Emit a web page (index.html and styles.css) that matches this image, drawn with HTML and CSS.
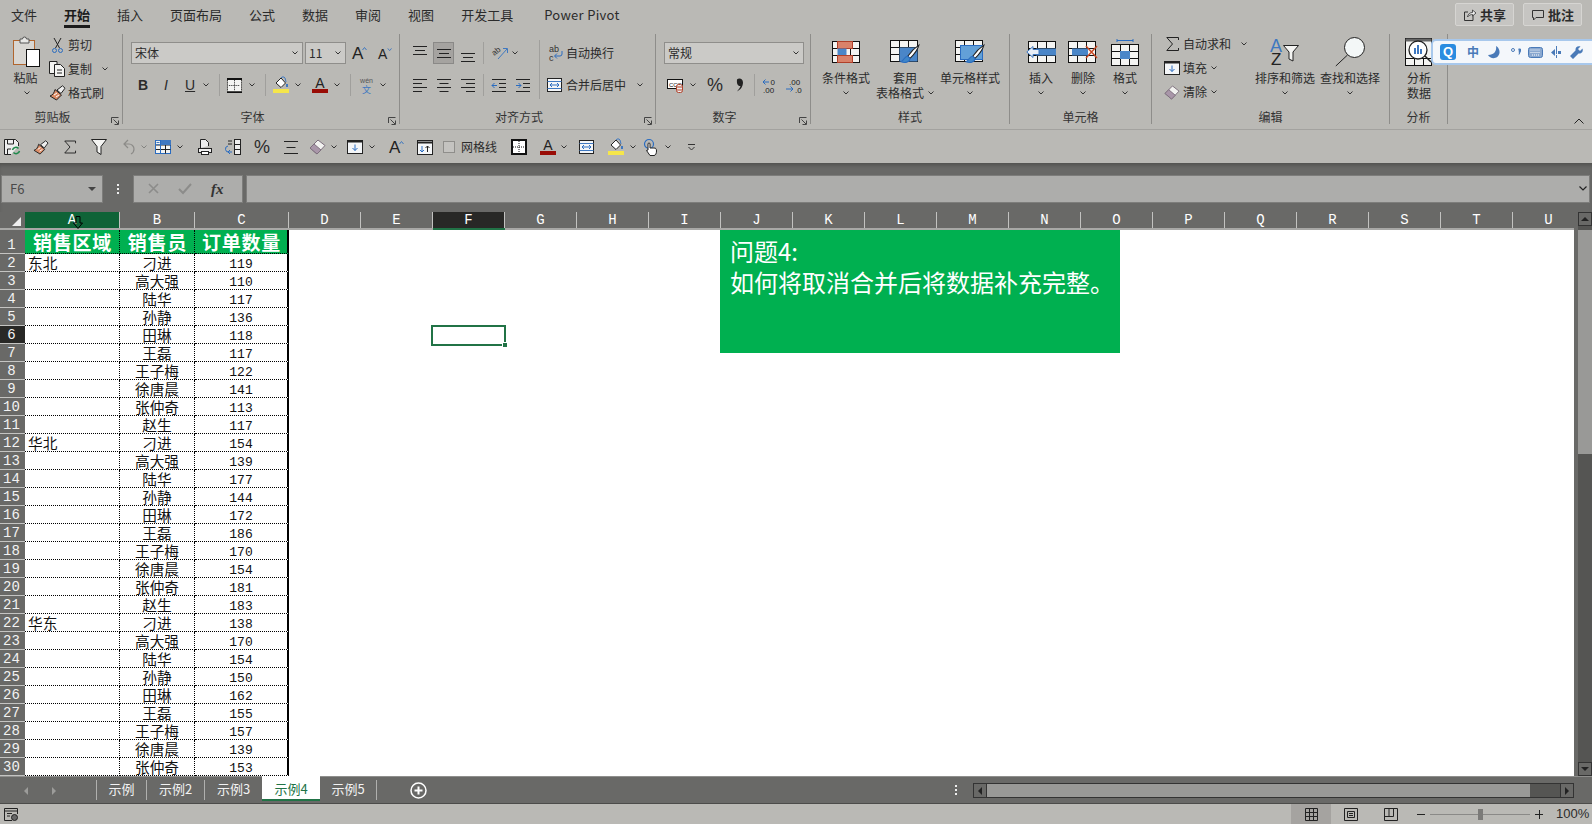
FILE: index.html
```html
<html lang="zh-CN">

<head>
  <meta charset="UTF-8">
  <title>Excel</title>
  <link rel="stylesheet" href="styles.css">
</head>

<body>
  <svg class="defs">
    <symbol id="chev" viewBox="0 0 6 4"><path d="M.5 .5 3 3 5.500 .5" fill="none" stroke="#333"/></symbol>
    <symbol id="launch" viewBox="0 0 8 8"><path d="M.5 6V.5H7.500M2.500 2.500 7 7M7.500 3.500V7.500H3.500" fill="none" stroke="#444"/></symbol>
    <symbol id="brush" viewBox="0 0 17 16"><path d="M8 5 13.500 .8 16 3.200 12 8.500Z" fill="#eee" stroke="#222"/><path d="M6 4.500 12.500 10 7.500 15 1 11C4 10 5 8 6 4.500Z" fill="#d98a64" stroke="#222"/><path d="M5 10l3-2M7 12l3-2" stroke="#fff"/></symbol>
    <symbol id="eraser" viewBox="0 0 17 16"><path d="M1 9 9 1 16 6.500 8 15Z" fill="#f2f2f0" stroke="#7d6f7d"/><path d="M1 9 5 5 12 11 8 15Z" fill="#a996a9" stroke="#7d6f7d"/></symbol>
    <symbol id="fill" viewBox="0 0 16 18"><path d="M3 7 8 2 12.500 7 8 11.500Z" fill="#fff" stroke="#222"/><path d="M8 2C9 .5 11 .5 12 2l1 4" fill="none" stroke="#3f78c0"/><path d="M14 8v3" stroke="#3f78c0" stroke-width="2"/><rect y="13" width="16" height="4" fill="#f5e64a"/></symbol>
    <symbol id="fonta" viewBox="0 0 16 18"><text x="8" y="11.500" text-anchor="middle" font-size="14" fill="#222">A</text><rect y="13" width="16" height="4" fill="#990c05"/></symbol>
    <symbol id="grow" viewBox="0 0 15 14"><text x="0" y="13" font-size="17" fill="#222">A</text><path d="M10.500 4 12.500 1.500 14.500 4" fill="none" stroke="#3f78c0"/></symbol>
    <symbol id="merge" viewBox="0 0 15 14"><rect x=".5" y=".5" width="14" height="13" fill="#f4f6f8" stroke="#222"/><path d="M.5 3.500h14M.5 10.500h14" stroke="#3f78c0"/><path d="M3 7h9M5 5 3 7l2 2M10 5l2 2-2 2" fill="none" stroke="#2a6cc0"/></symbol>
    <symbol id="boxdown" viewBox="0 0 16 14"><rect x=".5" y=".5" width="15" height="13" fill="#f4f6f8" stroke="#222"/><path d="M.5 1.500h15" stroke="#222" stroke-width="2"/><path d="M8 4.500v6M5.500 8 8 10.500 10.500 8" fill="none" stroke="#2a6cc0"/></symbol>
    <symbol id="bordered" viewBox="0 0 16 16"><rect x="1" y="1" width="14" height="14" fill="#fff" stroke="#111" stroke-width="2"/><path d="M8 2v12M2 8h12" stroke="#111" stroke-dasharray="1 1"/></symbol>
    <symbol id="lines" viewBox="0 0 14 9"><path d="M0 .5h14M2 4.500h10M0 8.500h14" stroke="#222"/></symbol>
    <symbol id="sigma" viewBox="0 0 13 14"><path d="M12.500 3V.5H.8L6.500 7 .8 13.500H12.500V11" fill="none" stroke="#222"/></symbol>
    <symbol id="table" viewBox="0 0 28 22"><rect x=".5" y=".5" width="27" height="21" fill="#f4f4f2" stroke="#111"/><path d="M.5 7.500h27M.5 14.500h27M9.500 .5v21M18.500 .5v21" stroke="#111"/></symbol>
    <symbol id="paintbrush" viewBox="0 0 18 18"><path d="M17 1C14 3 9 8 7 11L9 13C12 10 16 5 17 1Z" fill="#fff" stroke="#222"/><path d="M7 11C4 11 4 14 1 16 5 17.500 9 16 9 13Z" fill="#3f86c8" stroke="#2a6cc0"/></symbol>
  </svg>

  <div class="tabs">
    <span class="tab">文件</span>
    <span class="tab tab-on">开始</span>
    <span class="tab">插入</span>
    <span class="tab">页面布局</span>
    <span class="tab">公式</span>
    <span class="tab">数据</span>
    <span class="tab">审阅</span>
    <span class="tab">视图</span>
    <span class="tab">开发工具</span>
    <span class="tab tab-latin">Power Pivot</span>
    <div class="tab-btns">
      <span class="share-btn"><svg width="14" height="14" viewBox="0 0 14 14"><path d="M10 7v5.500H1.500V4H5" fill="none" stroke="#333"/><path d="M4.500 9C5 6 7 4.500 9.500 4.500V2L13 5 9.500 8V6.500C8 6.500 6 7 4.500 9Z" fill="#eee" stroke="#333" stroke-width=".8"/></svg>共享</span>
      <span class="share-btn"><svg width="14" height="14" viewBox="0 0 14 14"><path d="M1.500 2.500h11v7H5L2.500 12V9.500h-1Z" fill="none" stroke="#333"/></svg>批注</span>
    </div>
  </div>

  <div class="ribbon">
    <div class="group g-clip">
      <div class="group-body">
        <div class="big w28 ml13">
          <svg width="28" height="30" viewBox="0 0 28 30"><rect x=".5" y="3.500" width="21" height="24" fill="#d8d6d2" stroke="#b0652e"/><path d="M7 6V2h2.500a2 2 0 0 1 4 0H16v4Z" fill="#e8e8e6" stroke="#555"/><rect x="13.500" y="12.500" width="13" height="17" fill="#fff" stroke="#111"/></svg>
          <span class="paste-label">粘贴</span>
          <svg class="chev"><use href="#chev"/></svg>
        </div>
        <div class="list ml8 pt1">
          <div class="item"><span class="slot"><svg width="11" height="15" viewBox="0 0 11 15"><path d="M2 0 7.500 10M9 0 3.500 10" stroke="#222" fill="none"/><circle cx="2.500" cy="12.500" r="2" fill="none" stroke="#2a6cc0"/><circle cx="8.500" cy="12.500" r="2" fill="none" stroke="#2a6cc0"/></svg></span><span class="ml3">剪切</span></div>
          <div class="item"><span class="slot"><svg width="16" height="16" viewBox="0 0 16 16"><path d="M5 12.500H.5V.5H8V3" fill="#f4f4f2" stroke="#222"/><path d="M5.500 3.500h6l4 4v8h-10Z" fill="#f4f4f2" stroke="#222"/><path d="M8 9h5M8 12h5" stroke="#222"/></svg></span><span class="ml3">复制</span><svg class="chev ml10"><use href="#chev"/></svg></div>
          <div class="item"><span class="slot"><svg width="17" height="16"><use href="#brush"/></svg></span><span class="ml3">格式刷</span></div>
        </div>
      </div>
      <div class="group-label launchable"><span>剪贴板</span><svg class="launch"><use href="#launch"/></svg></div>
    </div>

    <div class="group g-font">
      <div class="group-body col">
        <div class="tool-row ml8">
          <span class="select w172">宋体<svg class="chev"><use href="#chev"/></svg></span>
          <span class="select w41 ml2">11<svg class="chev"><use href="#chev"/></svg></span>
          <svg class="ml6" width="15" height="14"><use href="#grow"/></svg>
          <svg class="ml11" width="14" height="13" viewBox="0 0 15 14"><text x="0" y="13" font-size="15" fill="#222">A</text><path d="M10.500 1.500 12.500 4 14.500 1.500" fill="none" stroke="#3f78c0"/></svg>
        </div>
        <div class="tool-row row2 ml15">
          <b class="fmt">B</b>
          <i class="fmt ml16">I</i>
          <u class="fmt w9 ml15">U</u>
          <svg class="chev ml10"><use href="#chev"/></svg>
          <span class="sep ml10"></span>
          <svg class="ml7" width="15" height="15" viewBox="0 0 16 16"><rect x="1" y="1" width="14" height="14" fill="#f4f4f2"/><path d="M0 1h16M0 15h16" stroke="#111" stroke-width="2"/><path d="M8 2v12M2 8h12M.5 2v12M15.500 2v12" stroke="#111" stroke-dasharray="1 1"/></svg>
          <svg class="chev ml7"><use href="#chev"/></svg>
          <span class="sep ml10"></span>
          <svg class="ml7" width="16" height="18"><use href="#fill"/></svg>
          <svg class="chev ml6"><use href="#chev"/></svg>
          <svg class="ml11" width="16" height="18"><use href="#fonta"/></svg>
          <svg class="chev ml6"><use href="#chev"/></svg>
          <span class="sep ml10"></span>
          <svg class="ml8" width="15" height="16" viewBox="0 0 15 16"><text x="7.500" y="6" text-anchor="middle" font-size="7" fill="#555">wén</text><text x="7.500" y="15.500" text-anchor="middle" font-size="9" fill="#3f78c0">文</text></svg>
          <svg class="chev ml6"><use href="#chev"/></svg>
        </div>
      </div>
      <div class="group-label launchable"><span>字体</span><svg class="launch"><use href="#launch"/></svg></div>
    </div>

    <div class="group g-align">
      <div class="group-body">
        <div class="col w139">
          <div class="tool-row ml13">
            <svg class="up4" width="14" height="9"><use href="#lines"/></svg>
            <span class="hot ml6"><svg width="14" height="9"><use href="#lines"/></svg></span>
            <svg class="down4 ml7" width="14" height="9"><use href="#lines"/></svg>
            <span class="sep ml8"></span>
            <svg class="ml8" width="16" height="14" viewBox="0 0 16 14"><path d="M6 13 15 3M11 2.500h4.500V7" fill="none" stroke="#3f78c0"/><text x="0" y="8" font-size="8" fill="#333" transform="rotate(-40 4 6)">ab</text></svg>
            <svg class="chev ml4"><use href="#chev"/></svg>
          </div>
          <div class="tool-row row2 ml13">
            <svg width="14" height="13" viewBox="0 0 14 13"><path d="M0 .5h14M0 4.500h9M0 8.500h14M0 12.500h9" stroke="#222"/></svg>
            <svg class="ml10" width="14" height="13" viewBox="0 0 14 13"><path d="M0 .5h14M2.500 4.500h9M0 8.500h14M2.500 12.500h9" stroke="#222"/></svg>
            <svg class="ml10" width="14" height="13" viewBox="0 0 14 13"><path d="M0 .5h14M5 4.500h9M0 8.500h14M5 12.500h9" stroke="#222"/></svg>
            <span class="sep ml8"></span>
            <svg class="ml8" width="14" height="13" viewBox="0 0 14 13"><path d="M0 .5h14M7 4.500h7M7 8.500h7M0 12.500h14" stroke="#222"/><path d="M5 6.500H0M2.500 4 0 6.500 2.500 9" fill="none" stroke="#2a6cc0"/></svg>
            <svg class="ml10" width="14" height="13" viewBox="0 0 14 13"><path d="M0 .5h14M7 4.500h7M7 8.500h7M0 12.500h14" stroke="#222"/><path d="M0 6.500h5M2.500 4 5 6.500 2.500 9" fill="none" stroke="#2a6cc0"/></svg>
          </div>
        </div>
        <span class="sep-tall"></span>
        <div class="col ml7">
          <div class="tool-row ml2">
            <svg width="15" height="18" viewBox="0 0 15 18"><text x="0" y="8" font-size="9" fill="#333">ab</text><text x="0" y="17" font-size="9" fill="#333">c</text><path d="M13 7v3a2 2 0 0 1-2 2H6M8 9.500 5.500 12 8 14.500" fill="none" stroke="#2a6cc0"/></svg>
            <span class="ml2">自动换行</span>
          </div>
          <div class="tool-row row2">
            <svg width="15" height="14"><use href="#merge"/></svg>
            <span class="ml4">合并后居中</span>
            <svg class="chev ml11"><use href="#chev"/></svg>
          </div>
        </div>
      </div>
      <div class="group-label launchable"><span>对齐方式</span><svg class="launch"><use href="#launch"/></svg></div>
    </div>

    <div class="group g-num">
      <div class="group-body col">
        <div class="tool-row ml8"><span class="select w140">常规<svg class="chev"><use href="#chev"/></svg></span></div>
        <div class="tool-row row2 ml11">
          <svg width="17" height="16" viewBox="0 0 17 16"><rect x=".5" y="2.500" width="15" height="9" fill="#fff" stroke="#111"/><text x="2" y="9.500" font-size="6" fill="#111">CCS</text><rect x="9.500" y="7.500" width="6" height="8" rx="2" fill="#eee" stroke="#b0402a"/><path d="M10 10h5M10 13h5" stroke="#b0402a"/></svg>
          <svg class="chev ml6"><use href="#chev"/></svg>
          <span class="pct ml11">%</span>
          <svg class="ml13" width="8" height="14" viewBox="0 0 8 14"><path d="M1 1.500C3-.5 7 .5 7 4.500 7 9 4 12 1 13.500 3 11 4 9.500 4.500 8 2 8.500.5 6 1 1.500Z" fill="#222"/></svg>
          <span class="sep ml10"></span>
          <svg class="ml7" width="16" height="15" viewBox="0 0 16 15"><path d="M7 4H1M3.500 1.500 1 4l2.500 2.500" fill="none" stroke="#2a6cc0"/><text x="8.500" y="7" font-size="8" fill="#222">0</text><text x="1" y="15" font-size="8" fill="#222">.00</text></svg>
          <svg class="ml8" width="16" height="15" viewBox="0 0 16 15"><text x="3" y="7" font-size="8" fill="#222">.00</text><path d="M0 11h7M4.500 8.500 7 11l-2.500 2.500" fill="none" stroke="#2a6cc0"/><text x="9" y="15" font-size="8" fill="#222">.0</text></svg>
        </div>
      </div>
      <div class="group-label launchable"><span>数字</span><svg class="launch"><use href="#launch"/></svg></div>
    </div>

    <div class="group g-style">
      <div class="group-body pl7 gap2">
        <div class="big w56">
          <svg width="28" height="22" viewBox="0 0 28 22"><use href="#table" width="28" height="22"/><rect x="5.500" y=".5" width="15" height="7" fill="#d9826a" stroke="#b0402a"/><rect x="5.500" y="7.500" width="9" height="7" fill="#4a86c8"/><rect x="5.500" y="14.500" width="15" height="7" fill="#d9826a" stroke="#b0402a"/></svg>
          <span>条件格式</span>
          <svg class="chev"><use href="#chev"/></svg>
        </div>
        <div class="big w58">
          <svg width="30" height="24" viewBox="0 0 30 24"><use href="#table" width="28" height="22"/><rect x="9.500" y="7.500" width="18" height="14" fill="#4a86c8"/><use href="#paintbrush" x="10" y="4" width="20" height="20"/></svg>
          <span>套用</span>
          <span>表格格式<svg class="chev ml4"><use href="#chev"/></svg></span>
        </div>
        <div class="big w68">
          <svg width="30" height="24" viewBox="0 0 30 24"><use href="#table" width="28" height="22"/><rect x="5.500" y="5.500" width="22" height="14" fill="#62a0d8" stroke="#2a6cc0"/><use href="#paintbrush" x="10" y="4" width="20" height="20"/></svg>
          <span>单元格样式</span>
          <svg class="chev"><use href="#chev"/></svg>
        </div>
      </div>
      <div class="group-label">样式</div>
    </div>

    <div class="group g-cell">
      <div class="group-body pl10">
        <div class="big w42">
          <svg width="30" height="22" viewBox="0 0 30 22"><use href="#table" x="2" width="28" height="22"/><rect x="10" y="7.500" width="20" height="7" fill="#4a86c8"/><path d="M13 8.500H7V5.500L.8 11 7 16.500V13.500H13Z" fill="#e8eef6" stroke="#3f78c0"/></svg>
          <span>插入</span>
          <svg class="chev"><use href="#chev"/></svg>
        </div>
        <div class="big w42">
          <svg width="30" height="22" viewBox="0 0 30 22"><use href="#table" width="28" height="22"/><rect x="4" y="7.500" width="16" height="7" fill="#4a86c8"/><path d="M18 5 29 17M29 5 18 17" stroke="#c8451f" stroke-width="1.400"/></svg>
          <span>删除</span>
          <svg class="chev"><use href="#chev"/></svg>
        </div>
        <div class="big w42">
          <svg width="28" height="27" viewBox="0 0 28 27"><path d="M6 1.500h16M6 0v3M22 0v3" stroke="#2a6cc0"/><use href="#table" y="5" width="28" height="22"/><rect x="9" y="12" width="10" height="8" fill="#4a86c8"/></svg>
          <span>格式</span>
          <svg class="chev"><use href="#chev"/></svg>
        </div>
      </div>
      <div class="group-label">单元格</div>
    </div>

    <div class="group g-edit">
      <div class="group-body pl11">
        <div class="list w90">
          <div class="item"><span class="slot slot18"><svg width="13" height="14"><use href="#sigma"/></svg></span><span class="ml2">自动求和</span><svg class="chev ml10"><use href="#chev"/></svg></div>
          <div class="item"><span class="slot slot18"><svg width="16" height="14"><use href="#boxdown"/></svg></span><span class="ml2">填充</span><svg class="chev ml4"><use href="#chev"/></svg></div>
          <div class="item"><span class="slot slot18"><svg width="16" height="15"><use href="#eraser"/></svg></span><span class="ml2">清除</span><svg class="chev ml4"><use href="#chev"/></svg></div>
        </div>
        <div class="big w64">
          <svg width="30" height="28" viewBox="0 0 30 28"><text x="0" y="14" font-size="18" fill="#3f78c0">A</text><text x="1" y="27" font-size="17" fill="#222">Z</text><path d="M13.500 7.500H28.500L23 14V23L19 21V14Z" fill="#f4f4f2" stroke="#222"/></svg>
          <span>排序和筛选</span>
          <svg class="chev"><use href="#chev"/></svg>
        </div>
        <div class="big w64 ml1">
          <svg width="30" height="30" viewBox="0 0 30 30"><circle cx="19.500" cy="10.500" r="10" fill="#f3f7f7" stroke="#222"/><path d="M12.500 18 .8 29" stroke="#222"/></svg>
          <span>查找和选择</span>
          <svg class="chev"><use href="#chev"/></svg>
        </div>
      </div>
      <div class="group-label">编辑</div>
    </div>

    <div class="group g-ana">
      <div class="group-body">
        <div class="big w58">
          <svg width="28" height="28" viewBox="0 0 28 28"><rect x=".5" y=".5" width="26" height="27" fill="#f4f4f2" stroke="#111"/><path d="M.5 2h26" stroke="#666" stroke-width="3"/><path d="M.5 20.500h26M9.500 20v8M18.500 20v8" stroke="#111"/><circle cx="13" cy="12" r="9" fill="#fff" stroke="#222" stroke-width="1.300"/><path d="M9 10h2v6H9zM12 7h2v9h-2zM15 11h2v5h-2z" fill="#3f78c0"/><path d="M20 18l6 6" stroke="#222" stroke-width="1.500"/></svg>
          <span>分析</span>
          <span>数据</span>
        </div>
      </div>
      <div class="group-label">分析</div>
    </div>

    <svg class="collapse" width="10" height="6" viewBox="0 0 10 6"><path d="M.5 5.500 5 1l4.500 4.500" fill="none" stroke="#222"/></svg>

    <div class="ime">
      <span class="ime-q">Q</span>
      <b class="ime-zh">中</b>
      <svg class="ml9" width="12" height="13" viewBox="0 0 12 13"><path d="M8 0C9 5 6 9 0 9 2 13 10 14 11.500 7 12 4 10 1 8 0Z" fill="#4a7ab8"/></svg>
      <svg class="ml11" width="10" height="8" viewBox="0 0 10 8"><circle cx="2" cy="2" r="1.500" fill="none" stroke="#4a7ab8"/><path d="M7.500 1h2v2L8 6.500" fill="#4a7ab8" stroke="#4a7ab8"/></svg>
      <svg class="ml7" width="15" height="11" viewBox="0 0 15 11"><rect x=".5" y=".5" width="14" height="10" rx="2" fill="#8aa8d0" stroke="#4a7ab8"/><path d="M2.500 3h10M2.500 5.500h10M4 8h7" stroke="#fff" stroke-dasharray="1 1"/></svg>
      <svg class="ml8" width="10" height="13" viewBox="0 0 10 13"><path d="M5.500 0v13" stroke="#4a7ab8" stroke-dasharray="8 1 3"/><path d="M4 3 0 6.500 4 10ZM7 5h3v3H7z" fill="#4a7ab8"/></svg>
      <svg class="ml9" width="13" height="13" viewBox="0 0 13 13"><path d="M12.500 2.500 10 5 8 3 10.500.5C8 -.5 5 1 5.500 4.500L0 10l3 3 5.500-5.500C12 8 13.500 5 12.500 2.500Z" fill="#4a7ab8"/></svg>
    </div>
  </div>

  <div class="qat">
    <svg class="ml4" width="16" height="16" viewBox="0 0 16 16"><path d="M7 15.500H.5V.5h11l3 3V7" fill="#eee" stroke="#222"/><path d="M3.500 1v4h6V1M3.500 15v-5H7" fill="none" stroke="#222"/><path d="M8.500 11a3.500 3.500 0 0 1 6-1.500M15.500 12a3.500 3.500 0 0 1-6 1.500" fill="none" stroke="#1f8a4c" stroke-width="1.500"/></svg>
    <svg class="ml13" width="16" height="15"><use href="#brush"/></svg>
    <svg class="ml15" width="12" height="14"><use href="#sigma"/></svg>
    <svg class="ml15" width="16" height="16" viewBox="0 0 16 16"><path d="M.5 .5h15L10 7.500V15.500L6 13V7.500Z" fill="#f4f4f2" stroke="#222"/></svg>
    <svg class="ml14" width="14" height="16" viewBox="0 0 14 16"><path d="M7 1 3 5l4 4M3 5h5a5 5 0 0 1 5 5c0 2-1 4-3 5" fill="none" stroke="#8c8b88" stroke-width="1.200"/></svg>
    <svg class="chev ml6 faded"><use href="#chev"/></svg>
    <svg class="ml8" width="16" height="14" viewBox="0 0 16 14"><rect x=".5" y=".5" width="15" height="13" fill="#f4f4f2" stroke="#2a6cc0"/><path d="M.5 5h15M.5 9.500h15M5.500 .5v13M10.500 .5v13" stroke="#222"/><path d="M.5 0v14M5.500 0v14" stroke="#2a6cc0"/><path d="M3 0v5" stroke="#3f78c0" stroke-width="3" stroke-dasharray="1 1"/><rect x="6" width="10" height="5" fill="#3f78c0"/></svg>
    <svg class="chev ml6"><use href="#chev"/></svg>
    <svg class="ml15" width="14" height="16" viewBox="0 0 14 16"><path d="M2.500 9V.5h5l3 3V7" fill="#eee" stroke="#222"/><rect x=".5" y="9.500" width="13" height="4" fill="#eee" stroke="#222"/><rect x="3.500" y="12.500" width="7" height="3" fill="#fff" stroke="#222"/></svg>
    <svg class="ml13" width="16" height="16" viewBox="0 0 16 16"><rect x="9.500" y=".5" width="6" height="15" fill="#eee" stroke="#222"/><path d="M9.500 5.500h6M9.500 10.500h6M3 2h4M3 5h4" stroke="#222"/><path d="M7 13H4a3 3 0 0 1-1-6M5 11l-2 2 2 2" fill="none" stroke="#2a6cc0"/></svg>
    <span class="pct ml13">%</span>
    <svg class="ml14" width="14" height="13" viewBox="0 0 14 13"><path d="M0 .5h14M2.500 6.500h9M0 12.500h14" stroke="#222"/></svg>
    <svg class="ml11" width="17" height="16"><use href="#eraser"/></svg>
    <svg class="chev ml5"><use href="#chev"/></svg>
    <svg class="ml10" width="16" height="14"><use href="#boxdown"/></svg>
    <svg class="chev ml6"><use href="#chev"/></svg>
    <svg class="ml14" width="15" height="14"><use href="#grow"/></svg>
    <svg class="ml13" width="16" height="15" viewBox="0 0 16 15"><rect x=".5" y=".5" width="15" height="14" fill="#f4f6f8" stroke="#222"/><path d="M.5 2.500h15" stroke="#222" stroke-width="2"/><path d="M5 6v6M3 10l2 2 2-2" fill="none" stroke="#2a6cc0"/><path d="M10.500 12V6M8.500 8l2-2 2 2" fill="none" stroke="#222"/></svg>
    <span class="check ml10"></span>
    <span class="ml6">网格线</span>
    <svg class="ml14" width="16" height="16"><use href="#bordered"/></svg>
    <svg class="ml13" width="16" height="18"><use href="#fonta"/></svg>
    <svg class="chev ml5"><use href="#chev"/></svg>
    <svg class="ml12" width="15" height="14"><use href="#merge"/></svg>
    <svg class="ml14" width="16" height="18"><use href="#fill"/></svg>
    <svg class="chev ml6"><use href="#chev"/></svg>
    <svg class="ml8" width="13" height="17" viewBox="0 0 13 17"><circle cx="5" cy="5" r="4.500" fill="none" stroke="#2a6cc0" stroke-width="1.200"/><path d="M4 5a1 1 0 0 1 2 0v4l1 0h3c2 0 2.500 1 2.500 3 0 2.500-1 4.500-2.500 4.500H6L2.500 11.500 4 11Z" fill="#fff" stroke="#222"/></svg>
    <svg class="chev ml8"><use href="#chev"/></svg>
    <svg class="ml17" width="7" height="7" viewBox="0 0 7 7"><path d="M0 .5h7M.5 3 3.500 6 6.500 3" fill="none" stroke="#333"/></svg>
  </div>

  <div class="formula-bar">
    <span class="name-box">F6<i class="tri"></i></span>
    <span class="dots"><i></i><i></i><i></i></span>
    <span class="fx-box">
      <svg width="11" height="11" viewBox="0 0 11 11"><path d="M1 1 10 10M10 1 1 10" stroke="#8c8c8a" stroke-width="1.600"/></svg>
      <svg class="ml19" width="14" height="11" viewBox="0 0 14 11"><path d="M1 6 5 10 13 1" fill="none" stroke="#8c8c8a" stroke-width="2"/></svg>
      <em class="fx">fx</em>
    </span>
    <span class="formula-input"><svg width="8" height="5" viewBox="0 0 8 5"><path d="M.5 .5 4 4 7.500 .5" fill="none" stroke="#222" stroke-width="1.200"/></svg></span>
  </div>

  <div class="workspace">
    <div class="sheet">
      <div class="col-head">
        <span class="corner"><i></i></span>
        <span class="ch ch-a ch-hover">A</span><span class="ch ch-b">B</span><span class="ch ch-c">C</span>
        <span class="ch">D</span><span class="ch">E</span><span class="ch ch-on">F</span><span class="ch">G</span><span class="ch">H</span><span class="ch">I</span><span class="ch">J</span><span class="ch">K</span><span class="ch">L</span><span class="ch">M</span><span class="ch">N</span><span class="ch">O</span><span class="ch">P</span><span class="ch">Q</span><span class="ch">R</span><span class="ch">S</span><span class="ch">T</span><span class="ch">U</span>
        <svg class="col-cursor" width="10" height="13" viewBox="0 0 10 13"><path d="M3 .5h4V7h2.500L5 12.500 .5 7H3Z" fill="none" stroke="#000"/></svg>
      </div>
      <div class="sheet-body">
        <table class="data">
          <tr class="head"><th>1</th><td>销售区域</td><td>销售员</td><td>订单数量</td></tr>
          <tr><th>2</th><td>东北</td><td>刁进</td><td>119</td></tr>
          <tr><th>3</th><td></td><td>高大强</td><td>110</td></tr>
          <tr><th>4</th><td></td><td>陆华</td><td>117</td></tr>
          <tr><th>5</th><td></td><td>孙静</td><td>136</td></tr>
          <tr><th>6</th><td></td><td>田琳</td><td>118</td></tr>
          <tr><th>7</th><td></td><td>王磊</td><td>117</td></tr>
          <tr><th>8</th><td></td><td>王子梅</td><td>122</td></tr>
          <tr><th>9</th><td></td><td>徐唐晨</td><td>141</td></tr>
          <tr><th>10</th><td></td><td>张仲奇</td><td>113</td></tr>
          <tr><th>11</th><td></td><td>赵生</td><td>117</td></tr>
          <tr><th>12</th><td>华北</td><td>刁进</td><td>154</td></tr>
          <tr><th>13</th><td></td><td>高大强</td><td>139</td></tr>
          <tr><th>14</th><td></td><td>陆华</td><td>177</td></tr>
          <tr><th>15</th><td></td><td>孙静</td><td>144</td></tr>
          <tr><th>16</th><td></td><td>田琳</td><td>172</td></tr>
          <tr><th>17</th><td></td><td>王磊</td><td>186</td></tr>
          <tr><th>18</th><td></td><td>王子梅</td><td>170</td></tr>
          <tr><th>19</th><td></td><td>徐唐晨</td><td>154</td></tr>
          <tr><th>20</th><td></td><td>张仲奇</td><td>181</td></tr>
          <tr><th>21</th><td></td><td>赵生</td><td>183</td></tr>
          <tr><th>22</th><td>华东</td><td>刁进</td><td>138</td></tr>
          <tr><th>23</th><td></td><td>高大强</td><td>170</td></tr>
          <tr><th>24</th><td></td><td>陆华</td><td>154</td></tr>
          <tr><th>25</th><td></td><td>孙静</td><td>150</td></tr>
          <tr><th>26</th><td></td><td>田琳</td><td>162</td></tr>
          <tr><th>27</th><td></td><td>王磊</td><td>155</td></tr>
          <tr><th>28</th><td></td><td>王子梅</td><td>157</td></tr>
          <tr><th>29</th><td></td><td>徐唐晨</td><td>139</td></tr>
          <tr><th>30</th><td></td><td>张仲奇</td><td>153</td></tr>
        </table>
        <div class="note">问题4:<br>如何将取消合并后将数据补充完整。</div>
        <div class="active-cell"><i></i></div>
      </div>
    </div>
    <div class="vscroll">
      <span class="sb-btn"><i class="tri tri-up"></i></span>
      <span class="sb-thumb"></span>
      <span class="sb-rest"></span>
      <span class="sb-btn"><i class="tri"></i></span>
    </div>
  </div>

  <div class="sheet-tabs">
    <i class="tri-left"></i>
    <i class="tri-right"></i>
    <span class="st st-first">示例</span>
    <span class="st">示例2</span>
    <span class="st">示例3</span>
    <span class="st st-on">示例4</span>
    <span class="st st-last">示例5</span>
    <svg class="add" width="17" height="17" viewBox="0 0 17 17"><circle cx="8.500" cy="8.500" r="7.500" fill="none" stroke="#fff" stroke-width="1.500"/><path d="M8.500 4.500v8M4.500 8.500h8" stroke="#fff" stroke-width="2"/></svg>
    <span class="dots sheet-dots"><i></i><i></i><i></i></span>
    <div class="hscroll">
      <span class="hb"><i class="tri-left dark"></i></span>
      <span class="hthumb"></span>
      <span class="hrest"></span>
      <span class="hb"><i class="tri-right dark"></i></span>
    </div>
  </div>

  <div class="status">
    <svg class="ml4" width="14" height="13" viewBox="0 0 14 13"><path d="M8 12.500H.5V.5h13V6M.5 3h13M3 5.500h5M3 8h3" fill="none" stroke="#222"/><circle cx="10.500" cy="9.500" r="3" fill="#666" stroke="#222"/></svg>
    <div class="status-right">
      <span class="view view-on"><svg width="13" height="13" viewBox="0 0 13 13"><path d="M.5 .5h12v12H.5zM4.500 .5v12M8.500 .5v12M.5 4.500h12M.5 8.500h12" fill="none" stroke="#222"/></svg></span>
      <span class="view"><svg width="14" height="13" viewBox="0 0 14 13"><path d="M.5 .5h13v12H.5zM3.500 3.500h7v6h-7zM5 5.500h4M5 7.500h4" fill="none" stroke="#222"/></svg></span>
      <span class="view"><svg width="14" height="13" viewBox="0 0 14 13"><path d="M.5 .5h13v12H.5zM.5 8.500h9V.5M5 .5v8" fill="none" stroke="#222"/></svg></span>
      <span class="minus"></span>
      <span class="slider"><i></i></span>
      <span class="plus"></span>
      <span class="zoom">100%</span>
    </div>
  </div>
</body>

</html>
```

FILE: styles.css
```css
body {
  background-color: #bab9b5;
  color: #2b2b2b;
  font-family: "Noto Sans CJK SC", sans-serif;
  font-size: 12px;
  line-height: 16px;
  margin: 0;
  width: 1592px;
  height: 824px;
  overflow: hidden;
}

svg {
  display: block;
  flex: none;
  overflow: visible;
}

symbol {
  overflow: visible;
}

svg text {
  font-family: "Liberation Sans", "Noto Sans CJK SC", sans-serif;
}

.defs {
  display: none;
}

.ml1 { margin-left: 1px; }
.ml2 { margin-left: 2px; }
.ml3 { margin-left: 3px; }
.ml4 { margin-left: 4px; }
.ml5 { margin-left: 5px; }
.ml6 { margin-left: 6px; }
.ml7 { margin-left: 7px; }
.ml8 { margin-left: 8px; }
.ml9 { margin-left: 9px; }
.ml10 { margin-left: 10px; }
.ml11 { margin-left: 11px; }
.ml12 { margin-left: 12px; }
.ml13 { margin-left: 13px; }
.ml14 { margin-left: 14px; }
.ml15 { margin-left: 15px; }
.ml16 { margin-left: 16px; }
.ml17 { margin-left: 17px; }
.ml19 { margin-left: 19px; }

.w9 { width: 9px; }
.w28 { width: 28px; }
.w41 { width: 41px; }
.w42 { width: 42px; }
.w56 { width: 56px; }
.w58 { width: 58px; }
.w64 { width: 64px; }
.w68 { width: 68px; }
.w90 { width: 90px; }
.w139 { width: 139px; }
.w140 { width: 140px; }
.w172 { width: 172px; }

.pl7 { padding-left: 7px; }
.pl10 { padding-left: 10px; }
.pl11 { padding-left: 11px; }
.pt1 { padding-top: 1px; }
.gap2 { gap: 2px; }

/* tabs */

.tabs {
  display: flex;
  align-items: flex-start;
  gap: 27px;
  height: 30px;
  padding-left: 11px;
  box-sizing: border-box;
  font-size: 13px;
}

.tab {
  height: 28px;
  line-height: 29px;
  box-sizing: border-box;
}

.tab-on {
  font-weight: 700;
  color: #1c1c1c;
  border-bottom: 3px solid #1c1c1c;
}

.tab-latin {
  margin-left: 4px;
  letter-spacing: 0.3px;
}

.tab-btns {
  display: flex;
  gap: 9px;
  margin-left: auto;
  margin-right: 10px;
  padding-top: 3px;
}

.share-btn {
  display: flex;
  align-items: center;
  justify-content: center;
  gap: 3px;
  width: 59px;
  height: 23px;
  box-sizing: border-box;
  background-color: #c6c5c2;
  border: 1px solid #d6d5d2;
  border-radius: 2px;
  font-weight: 700;
  font-size: 13px;
}

/* ribbon */

.ribbon {
  position: relative;
  display: flex;
  height: 100px;
  box-sizing: border-box;
  padding-top: 4px;
  border-bottom: 1px solid #a3a29f;
}

.group {
  display: flex;
  flex-direction: column;
  flex: none;
  box-sizing: border-box;
  height: 90px;
  border-right: 1px solid #8e8d8a;
}

.g-clip { width: 123px; }
.g-font { width: 277px; }
.g-align { width: 256px; }
.g-num { width: 155px; }
.g-style { width: 199px; }
.g-cell { width: 142px; }
.g-edit { width: 238px; }
.g-ana { width: 58px; }

.group-body {
  display: flex;
  height: 76px;
}

.group-body.col,
.col {
  display: flex;
  flex-direction: column;
}

.group-label {
  display: flex;
  height: 14px;
  align-items: center;
  justify-content: center;
  line-height: 14px;
  color: #333;
}

.launchable span {
  flex: 1;
  text-align: center;
}

.launch {
  width: 8px;
  height: 8px;
  margin-left: 6px;
  margin-right: 3px;
  margin-top: 7px;
}

.big {
  display: grid;
  grid-template-rows: 36px 15px 15px;
  justify-items: center;
  align-items: center;
  flex: none;
  white-space: nowrap;
}

.big span {
  display: flex;
  align-items: center;
  line-height: 15px;
}

.big .paste-label {
  margin-right: 3px;
}

.list {
  display: flex;
  flex-direction: column;
  gap: 4px;
  flex: none;
}

.item {
  display: flex;
  align-items: center;
  height: 20px;
}

.slot {
  display: flex;
  justify-content: center;
  width: 16px;
}

.slot18 {
  width: 18px;
}

.chev {
  width: 6px;
  height: 4px;
  flex: none;
}

.faded {
  opacity: 0.4;
}

.tool-row {
  display: flex;
  align-items: center;
  height: 22px;
  margin-top: 8px;
}

.row2 {
  margin-top: 10px;
}

.select {
  display: flex;
  align-items: center;
  justify-content: space-between;
  height: 22px;
  box-sizing: border-box;
  padding: 0 4px 0 3px;
  background-color: #cbcac7;
  border: 1px solid #8f8e8b;
  font-size: 12px;
}

.sep {
  width: 1px;
  height: 22px;
  background-color: #a09f9c;
  flex: none;
}

.sep-tall {
  width: 1px;
  height: 59px;
  margin-top: 6px;
  background-color: #a09f9c;
  flex: none;
}

.fmt {
  width: 8px;
  font-family: "Liberation Sans", sans-serif;
  font-size: 14px;
  text-align: center;
}

.hot {
  display: flex;
  align-items: center;
  justify-content: center;
  width: 21px;
  height: 22px;
  background-color: #a5a3a0;
  border: 1px solid #8a8987;
  box-sizing: border-box;
}

.up4 { margin-bottom: 5px; }
.down4 { margin-top: 8px; }

.pct {
  width: 16px;
  font-family: "Liberation Sans", sans-serif;
  font-size: 18px;
  text-align: center;
  line-height: 18px;
}

.collapse {
  margin: auto 8px 5px auto;
}

.ime {
  position: absolute;
  left: 1431px;
  top: 9px;
  display: flex;
  align-items: center;
  width: 170px;
  height: 26px;
  box-sizing: border-box;
  padding-left: 7px;
  background-color: #f4f7fb;
  border: 2px solid #a8c8ec;
  border-radius: 5px;
}

.ime-q {
  width: 16px;
  height: 16px;
  background-color: #2a8ce0;
  border-radius: 3px;
  color: #fff;
  font: bold 13px/16px "Liberation Sans", sans-serif;
  text-align: center;
}

.ime-zh {
  margin-left: 11px;
  color: #4a7ab8;
  font-size: 12px;
}

/* quick access */

.qat {
  display: flex;
  align-items: center;
  height: 33px;
  box-sizing: border-box;
  padding-top: 1px;
}

.check {
  width: 12px;
  height: 12px;
  box-sizing: border-box;
  background-color: #c4c3c0;
  border: 1px solid #8f8e8b;
  flex: none;
}

/* formula bar */

.formula-bar {
  display: flex;
  align-items: center;
  height: 49px;
  box-sizing: border-box;
  padding: 2px 2px 0 1px;
  background-color: #696967;
  box-shadow: inset 0 4px 4px -2px #4f4f4d;
}

.name-box {
  position: relative;
  width: 102px;
  height: 28px;
  box-sizing: border-box;
  padding-left: 8px;
  background-color: #adadab;
  border: 1px solid #7d7d7b;
  color: #4a4a4a;
  font-size: 13px;
  line-height: 26px;
}

.name-box .tri {
  position: absolute;
  right: 6px;
  top: 11px;
  border-top-color: #444;
}

.tri {
  display: block;
  width: 0;
  height: 0;
  border-left: 4px solid transparent;
  border-right: 4px solid transparent;
  border-top: 4px solid #222;
}

.tri-up {
  border-top: 0;
  border-bottom: 4px solid #222;
}

.dots {
  display: flex;
  flex-direction: column;
  gap: 2px;
  margin-left: 14px;
  width: 2px;
}

.dots i {
  width: 2px;
  height: 2px;
  background-color: #eee;
}

.fx-box {
  display: flex;
  align-items: center;
  width: 110px;
  height: 28px;
  box-sizing: border-box;
  margin-left: 14px;
  padding-left: 14px;
  background-color: #adadab;
  border: 1px solid #7d7d7b;
}

.fx {
  margin-left: 19px;
  color: #333;
  font-family: "Liberation Serif", serif;
  font-size: 15px;
  font-weight: 700;
}

.formula-input {
  display: flex;
  align-items: center;
  justify-content: flex-end;
  flex: 1;
  height: 28px;
  box-sizing: border-box;
  margin-left: 3px;
  padding-right: 2px;
  background-color: #adadab;
  border: 1px solid #7d7d7b;
}

/* sheet */

.workspace {
  display: flex;
  height: 564px;
  background-color: #696967;
}

.sheet {
  width: 1574px;
  overflow: hidden;
}

.col-head {
  position: relative;
  display: flex;
  height: 18px;
  box-sizing: border-box;
  border-bottom: 2px solid #a8a8a6;
  color: #fff;
  font-family: "Liberation Mono", monospace;
  font-size: 14px;
  line-height: 16px;
}

.corner {
  position: relative;
  width: 25px;
  flex: none;
}

.corner i {
  position: absolute;
  left: 12px;
  top: 5px;
  width: 0;
  height: 0;
  border-left: 9px solid transparent;
  border-bottom: 9px solid #eee;
}

.ch {
  width: 72px;
  flex: none;
  box-sizing: border-box;
  border-right: 1px solid #c2c2c0;
  text-align: center;
}

.ch-a {
  width: 95px;
}

.ch-b {
  width: 75px;
}

.ch-c {
  width: 94px;
}

.ch-hover {
  background-color: #0f6337;
}

.ch-on {
  background-color: #282826;
  box-shadow: 0 2px 0 #217346;
}

.col-cursor {
  position: absolute;
  left: 73px;
  top: 4px;
}

.sheet-body {
  position: relative;
  height: 546px;
  background-color: #fff;
  overflow: hidden;
}

.data {
  table-layout: fixed;
  width: 289px;
  border-collapse: separate;
  border-spacing: 0;
  color: #111;
  font-size: 14.67px;
}

.data th {
  width: 25px;
  height: 18px;
  box-sizing: border-box;
  padding: 2px 2px 0 0;
  background-color: #696967;
  border-bottom: 1px solid #c4c4c2;
  color: #f2f2f2;
  font: 14px/15px "Liberation Mono", monospace;
  text-align: center;
}

.data tr:nth-child(6) th {
  background-color: #282826;
}

.data td {
  height: 18px;
  box-sizing: border-box;
  padding: 1px 0 0;
  border-bottom: 1px dotted #000;
  border-right: 1px dotted #000;
  line-height: 16px;
  text-align: center;
  white-space: nowrap;
}

.data td:nth-child(2) {
  width: 95px;
  padding-left: 3px;
  text-align: left;
}

.data td:nth-child(3) {
  width: 75px;
}

.data td:nth-child(4) {
  width: 94px;
  padding-top: 5px;
  border-right: 2px solid #000;
  font-family: "Liberation Mono", monospace;
  font-size: 13px;
  line-height: 12px;
}

.data .head th {
  height: 24px;
  vertical-align: bottom;
}

.data .head td,
.data .head td:nth-child(2),
.data .head td:nth-child(4) {
  height: 24px;
  padding: 0 0 0 1px;
  background-color: #00b050;
  color: #fff;
  font-family: "Noto Sans CJK SC", sans-serif;
  font-size: 19px;
  font-weight: 700;
  letter-spacing: 0.8px;
  line-height: 22px;
  text-align: center;
}

.note {
  position: absolute;
  left: 720px;
  top: 0;
  width: 400px;
  height: 123px;
  box-sizing: border-box;
  padding: 5px 0 0 10px;
  background-color: #00b050;
  color: #fff;
  font-size: 24px;
  line-height: 31px;
  white-space: nowrap;
}

.active-cell {
  position: absolute;
  left: 431px;
  top: 95px;
  width: 75px;
  height: 21px;
  box-sizing: border-box;
  border: 2px solid #217346;
}

.active-cell i {
  position: absolute;
  right: -4px;
  bottom: -4px;
  width: 6px;
  height: 6px;
  background-color: #217346;
  border: 1px solid #fff;
  box-sizing: border-box;
}

/* scrollbars */

.vscroll {
  display: flex;
  flex-direction: column;
  width: 14px;
  margin-left: 4px;
  background-color: #555553;
}

.sb-btn {
  display: flex;
  align-items: center;
  justify-content: center;
  height: 14px;
  box-sizing: border-box;
  background-color: #696967;
  border: 1px solid #333;
  flex: none;
}

.sb-thumb {
  height: 224px;
  margin-top: 4px;
  background-color: #999997;
  flex: none;
}

.sb-rest {
  flex: 1;
}

.sheet-tabs {
  display: flex;
  align-items: flex-start;
  height: 28px;
  box-sizing: border-box;
  background-color: #696967;
  border-top: 1px solid #8f8f8d;
  border-bottom: 1px solid #4c4c4a;
  color: #f2f2f2;
  font-size: 13px;
}

.sheet-tabs > .tri-left {
  margin: 10px 0 0 24px;
}

.sheet-tabs > .tri-right {
  margin: 10px 0 0 24px;
}

.tri-left,
.tri-right {
  display: block;
  width: 0;
  height: 0;
  border-top: 4px solid transparent;
  border-bottom: 4px solid transparent;
  flex: none;
}

.tri-left {
  border-right: 4px solid #9c9c9a;
}

.tri-right {
  border-left: 4px solid #9c9c9a;
}

.dark.tri-left {
  border-right-color: #222;
}

.dark.tri-right {
  border-left-color: #222;
}

.st {
  width: 58px;
  height: 20px;
  margin-top: 3px;
  box-sizing: border-box;
  border-left: 1px solid #b0b0ae;
  line-height: 18px;
  text-align: center;
  flex: none;
}

.st-first {
  width: 50px;
  margin-left: 40px;
}

.st-last {
  width: 57px;
  border-left: 0;
  border-right: 1px solid #b0b0ae;
}

.st-on {
  height: 25px;
  margin-top: -1px;
  padding-top: 4px;
  background-color: #fff;
  border-left: 0;
  border-bottom: 2px solid #217346;
  color: #217346;
}

.add {
  margin: 5px 0 0 33px;
}

.sheet-dots {
  margin: 8px 0 0 528px;
}

.hscroll {
  display: flex;
  width: 601px;
  height: 15px;
  margin: 6px 0 0 16px;
  box-sizing: border-box;
  background-color: #555553;
  border-top: 1px solid #333;
  border-bottom: 1px solid #333;
}

.hb {
  display: flex;
  align-items: center;
  justify-content: center;
  width: 14px;
  background-color: #696967;
  border-left: 1px solid #333;
  border-right: 1px solid #333;
  box-sizing: border-box;
  flex: none;
}

.hthumb {
  width: 543px;
  background-color: #999997;
  flex: none;
}

.hrest {
  flex: 1;
}

/* status */

.status {
  display: flex;
  align-items: center;
  height: 20px;
}

.status-right {
  display: flex;
  align-items: center;
  height: 20px;
  margin-left: auto;
}

.view {
  display: flex;
  align-items: center;
  justify-content: center;
  width: 40px;
  height: 20px;
}

.view-on {
  background-color: #a5a3a0;
}

.minus {
  width: 8px;
  height: 1px;
  margin-left: 6px;
  background-color: #222;
}

.slider {
  position: relative;
  width: 100px;
  height: 1px;
  margin-left: 5px;
  background-color: #8a8987;
}

.slider i {
  position: absolute;
  left: 48px;
  top: -5px;
  width: 5px;
  height: 11px;
  background-color: #7b7a78;
}

.plus {
  position: relative;
  width: 8px;
  height: 1px;
  margin-left: 5px;
  background-color: #222;
}

.plus::after {
  content: "";
  position: absolute;
  left: 3.5px;
  top: -4px;
  width: 1px;
  height: 9px;
  background-color: #222;
}

.zoom {
  width: 35px;
  margin-left: 13px;
  margin-right: 1px;
  font-family: "Liberation Sans", sans-serif;
  font-size: 13px;
}
```
